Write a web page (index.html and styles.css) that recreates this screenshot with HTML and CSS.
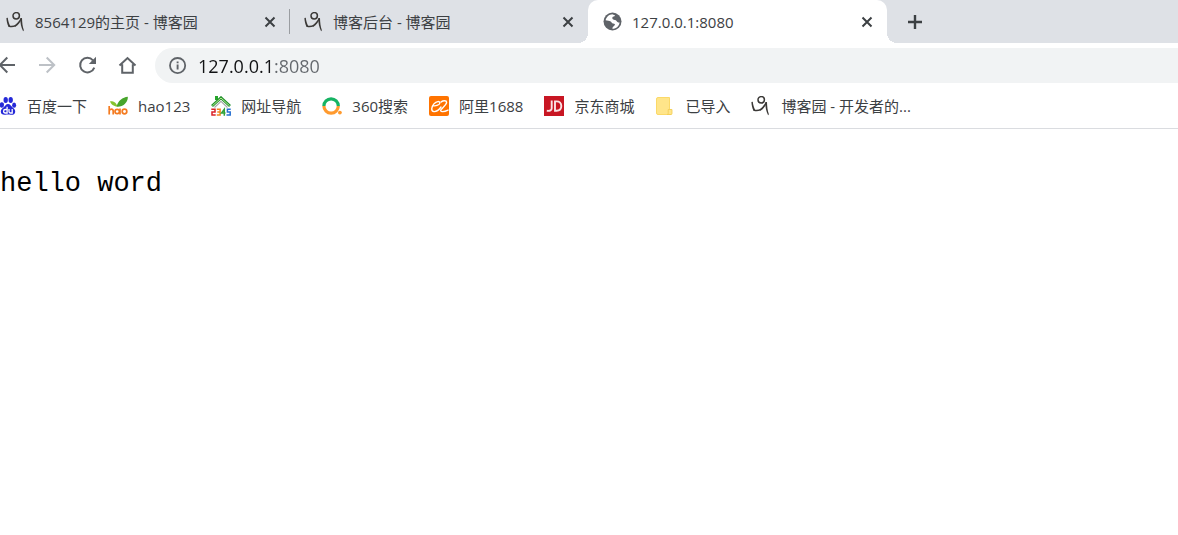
FILE: index.html
```html
<!DOCTYPE html>
<html lang="zh-CN">
<head>
<meta charset="utf-8">
<title>127.0.0.1:8080</title>
<link rel="stylesheet" href="styles.css">
</head>
<body>
<svg class="defs" aria-hidden="true">
  <symbol id="cnblogs" viewBox="0 0 20 20">
    <circle cx="10.200" cy="3.800" r="3.200" fill="none" stroke="#3b3937" stroke-width="1.500"/>
    <g fill="#3b3937">
      <path d="M.4 6l1.400-.2c.3 2.900 1.100 5.600 2.400 8.200l-1.700.8C1.200 12 .5 9 .4 6z"/>
      <path d="M2.400 13.400c2.500.6 5 .5 7.300-.3v1.500c-2.400.8-4.900 1-7.200.2z"/>
      <path d="M8.300 13.400c2.700-1.700 4.800-4.200 6.500-7.400l1.100.6c-1.400 3.700-3.500 6.500-6.500 8.100z"/>
      <path d="M14.300 6.300l1.700-.4c.1 4.500.6 8.700 1.900 12.400l-.8.9c-1.900-3.500-2.900-8-2.800-12.900z"/>
    </g>
  </symbol>
  <symbol id="close" viewBox="0 0 12 12">
    <path d="M1.500 1.500l9 9M10.500 1.500l-9 9" stroke="#3c4043" stroke-width="2" fill="none"/>
  </symbol>
</svg>

<header class="browser">
  <div class="tabs" role="tablist">
    <div class="tab tab-first">
      <button class="tab-label" role="tab" aria-selected="false"><svg class="icon"><use href="#cnblogs"/></svg><span>8564129的主页 - 博客园</span></button>
      <button class="tab-close" aria-label="关闭"><svg class="close-icon"><use href="#close"/></svg></button>
    </div>
    <div class="tab tab-divided">
      <button class="tab-label" role="tab" aria-selected="false"><svg class="icon"><use href="#cnblogs"/></svg><span>博客后台 - 博客园</span></button>
      <button class="tab-close" aria-label="关闭"><svg class="close-icon"><use href="#close"/></svg></button>
    </div>
    <div class="tab tab-active">
      <button class="tab-label" role="tab" aria-selected="true">
        <svg class="icon" viewBox="0 0 20 20"><circle cx="9.500" cy="9.500" r="9" fill="#5f6368"/><path d="M9.600 2.200C6 2.400 3.400 4.800 2.600 8.300c1.900.2 3.700.5 5.100 1.300 1 .6 1 1.800 2.400 1.900 1.500.1 2.100.5 1.700 1.500-.5 1.200-2.300 1.300-2.500 3.700 4 .1 6.800-2.600 7.300-6.300-1.300.4-2.300-.2-3-1.400-.8-1.300-2.600-.8-3.700-1.700-1.200-1-.5-2.500.8-2.700 1.100-.2 1.400-.8.900-1.500-.6-.6-1.600.1-2-.9z" fill="#fff"/></svg>
        <span>127.0.0.1:8080</span></button>
      <button class="tab-close" aria-label="关闭"><svg class="close-icon"><use href="#close"/></svg></button>
    </div>
    <button class="new-tab" aria-label="打开新的标签页"><svg class="plus" viewBox="0 0 16 16"><path d="M8 1v14M1 8h14" stroke="#3c4043" stroke-width="2.400" fill="none"/></svg></button>
  </div>

  <div class="toolbar">
    <nav class="nav">
      <button class="nav-btn back" aria-label="后退"><svg viewBox="0 0 20 20"><path d="M18 9H3M10.300 1.500L2.800 9l7.500 7.500" fill="none" stroke="#5f6368" stroke-width="2"/></svg></button>
      <button class="nav-btn" aria-label="前进" disabled><svg viewBox="0 0 20 20"><path d="M2 9h15M9.700 1.500l7.500 7.500-7.500 7.500" fill="none" stroke="#bdc1c6" stroke-width="2"/></svg></button>
      <button class="nav-btn" aria-label="重新加载"><svg viewBox="0 0 20 20"><path d="M17.300 11.600A7.300 7.300 0 1 1 16 4.300" fill="none" stroke="#5f6368" stroke-width="2"/><path d="M19 .8v7.200h-7.200z" fill="#5f6368"/></svg></button>
      <button class="nav-btn" aria-label="主页"><svg viewBox="0 0 20 20"><path d="M2.500 9.500L10.500 2l8 7.500M5.200 8.300v8.400h10.600V8.300" fill="none" stroke="#5f6368" stroke-width="2"/></svg></button>
    </nav>
    <label class="omnibox">
      <svg class="info" viewBox="0 0 18 18"><circle cx="8.600" cy="8.600" r="7.600" fill="none" stroke="#5f6368" stroke-width="1.800"/><path d="M8.600 7.600v5M8.600 4.400v1.900" stroke="#5f6368" stroke-width="1.900"/></svg>
      <input class="url" type="text" value="127.0.0.1:8080" aria-label="地址栏">
    </label>
  </div>

  <nav class="bookmarks">
    <a class="bookmark" href="#">
      <svg class="icon icon-cut" viewBox="2 0 17 20"><g fill="#2529d8"><ellipse cx="3.900" cy="9" rx="2.100" ry="2.700"/><ellipse cx="7.700" cy="4" rx="2.200" ry="2.900"/><ellipse cx="12.700" cy="4" rx="2.200" ry="2.900"/><ellipse cx="16.100" cy="9.200" rx="2" ry="2.600"/><path d="M10 8c2.200 0 2.900 1.900 4.600 3.400 1.800 1.500 2.800 2.600 2.600 4.600-.3 2.500-2.400 3-4.700 2.700-1.700-.3-3.200-.3-5 0-2.500.3-4.500-.3-4.700-2.900-.2-2 1.200-3.100 2.900-4.500C7.300 10 7.800 8 10 8z"/></g><path d="M9.100 10.800v6.200H7.300c-2.300 0-2.300-3.500 0-3.500h1.800M11 13v2.600c0 .9.400 1.400 1.300 1.400h1.900v-4" fill="none" stroke="#fff" stroke-width="1.300"/></svg>
      <span>百度一下</span></a>
    <a class="bookmark" href="#">
      <svg class="icon" viewBox="0 0 20 20"><path d="M9.300 10.500C8.500 6.300 5.500 4.900 2 5.200c.8 3 3.600 5.200 7.300 5.300z" fill="#86c32d"/><path d="M8.700 10.700C9.700 5 14.700 1.200 19.800.8c.5 5.600-5.300 10.700-11.100 9.900z" fill="#48a52c"/><g fill="none" stroke="#f47b20" stroke-width="1.700"><path d="M1.200 10v8.500M1.200 15c.5-2.400 4-2.600 4 .2v3.300"/><circle cx="9.200" cy="15.500" r="2.200"/><path d="M12 12.500v6"/><circle cx="16.500" cy="15.500" r="2.300"/></g></svg>
      <span>hao123</span></a>
    <a class="bookmark" href="#">
      <svg class="icon" viewBox="0 0 20 20"><path d="M4 0h3v4H4z" fill="#27a52c"/><path d="M1 10L10 1.800l9 8.200" fill="none" stroke="#208f2b" stroke-width="2.800"/><path d="M1.400 9.800L10 2l8.600 7.800" fill="none" stroke="#b9ec92" stroke-width="1"/><path d="M3.500 11.500L10 5.400l6.500 6.100" fill="none" stroke="#aaa" stroke-width="1.200"/><g fill="none" stroke-width="1.500"><path d="M.3 13.200h3.700v2.900H1v2.900h3.700" stroke="#dc2329"/><path d="M5.800 13.200h3.300V19H5.800M6.300 16.100h3" stroke="#f1841c"/><path d="M13.300 19.700v-6.400l-2.800 3.800h4" stroke="#31a33a"/><path d="M19.700 13.200h-3.300V16h2.800v3h-3.700" stroke="#246fd1"/></g></svg>
      <span>网址导航</span></a>
    <a class="bookmark" href="#">
      <svg class="icon" viewBox="0 0 20 20"><g fill="none" stroke-width="3.200"><path d="M1.900 10a7.200 7.200 0 0 1 14.400 0" stroke="#16b363"/><path d="M16.300 10a7.200 7.200 0 0 1-14.400 0" stroke="#ff9a2e"/></g><circle cx="17.900" cy="16.600" r="1.900" fill="#ff9a2e"/></svg>
      <span>360搜索</span></a>
    <a class="bookmark" href="#">
      <svg class="icon" viewBox="0 0 20 20"><rect width="20" height="20" rx="2" fill="#ff7300"/><path d="M4.500 9.800c2.600.3 6.200-.9 6.400-2.800.1-2.300-3.600-1.800-6 .9-2.600 2.900-3.200 7.400.1 7.700 2.600.2 5.300-2.300 7-4.600M12.200 5.900c1.900-1.500 5.400-1.700 5.400.3 0 2.500-4 5.400-5.600 7.400-.8 1-.2 2 1.300 2 2 .1 3.900-.6 5.700-1.500" fill="none" stroke="#fff" stroke-width="1.400" stroke-linecap="round"/></svg>
      <span>阿里1688</span></a>
    <a class="bookmark" href="#">
      <svg class="icon" viewBox="0 0 20 20"><rect width="20" height="20" fill="#c81623"/><path d="M7.700 4.500v7.700c0 2.100-1.500 2.900-4.900 2.600M11 5.400v9.300h1.600c3 0 4.700-1.600 4.700-4.700 0-3-1.700-4.600-4.700-4.600z" fill="none" stroke="#fbe3e5" stroke-width="1.900"/></svg>
      <span>京东商城</span></a>
    <a class="bookmark" href="#">
      <svg class="icon" viewBox="0 0 20 20"><path d="M3 1.500h11.500v12h1.500v5H3A1.500 1.500 0 0 1 1.500 17V3A1.500 1.500 0 0 1 3 1.500z" fill="#ffe58a" stroke="#fbd968" stroke-width="1"/><path d="M16 13.500h-2.800v2.800c0 1.300 0 2.200-.9 2.200H16c.7 0 1-.4 1-1v-4z" fill="#ffe58a" stroke="#f1cc52" stroke-width=".8"/></svg>
      <span>已导入</span></a>
    <a class="bookmark" href="#">
      <svg class="icon"><use href="#cnblogs"/></svg>
      <span>博客园 - 开发者的...</span></a>
  </nav>
</header>

<main class="page"><p class="message">hello word</p></main>
</body>
</html>
```
FILE: styles.css
```css
* {
  box-sizing: border-box;
}

body {
  margin: 0;
  background: #fff;
  color: #3c4043;
  font-family: "Open Sans", "Noto Sans CJK SC", sans-serif;
  font-size: 15px;
  line-height: 20px;
}

button {
  border: 0;
  padding: 0;
  background: none;
  color: inherit;
  font: inherit;
}

svg {
  display: block;
  flex: none;
}

.defs {
  position: absolute;
  width: 0;
  height: 0;
}

.icon {
  width: 20px;
  height: 20px;
}

.icon-cut {
  width: 17px;
}

.browser {
  border-bottom: 1px solid #dadce0;
}

.tabs {
  display: flex;
  height: 43px;
  background: #dee1e6;
}

.tab {
  display: flex;
  align-items: center;
  flex: 0 1 299px;
  min-width: 0;
  padding: 0 14px 0 15px;
}

.tab-first {
  flex-basis: 289px;
  padding: 0 13px 0 6px;
}

.tab-divided {
  background: linear-gradient(#9a9da1, #9a9da1) left center / 1px 25px no-repeat;
}

.tab-active {
  position: relative;
  border-radius: 10px 10px 0 0;
  background: #fff;
}

.tab-active::before,
.tab-active::after {
  content: "";
  position: absolute;
  bottom: 0;
  width: 10px;
  height: 10px;
}

.tab-active::before {
  right: 100%;
  background: radial-gradient(circle at 0 0, transparent 10px, #fff 10px);
}

.tab-active::after {
  left: 100%;
  background: radial-gradient(circle at 100% 0, transparent 10px, #fff 10px);
}

.tab-label {
  display: flex;
  align-items: center;
  flex: 1;
  gap: 9px;
  min-width: 0;
  text-align: left;
  white-space: nowrap;
}

.close-icon {
  width: 12px;
  height: 12px;
}

.new-tab {
  padding: 0 20px;
}

.plus {
  width: 16px;
  height: 16px;
}

.toolbar {
  display: flex;
  align-items: center;
  padding-top: 5px;
}

.nav {
  display: flex;
  gap: 20px;
  padding-right: 18px;
}

.nav-btn {
  width: 20px;
  height: 20px;
}

.back {
  width: 17px;
}

.nav-btn svg {
  width: 20px;
  height: 20px;
}

.back svg {
  margin-left: -3px;
}

.omnibox {
  display: flex;
  align-items: center;
  flex: 1;
  gap: 11px;
  height: 35px;
  padding-left: 14px;
  border-radius: 18px 0 0 18px;
  background: #f1f3f4;
}

.info {
  width: 18px;
  height: 18px;
}

.url {
  flex: 1;
  min-width: 0;
  border: 0;
  padding: 0;
  outline: 0;
  background: linear-gradient(to right, #111214 75px, #64686d 75px);
  -webkit-background-clip: text;
  background-clip: text;
  color: transparent;
  font: inherit;
  font-size: 18px;
  line-height: 24px;
}

.bookmarks {
  display: flex;
  align-items: center;
  gap: 21px;
  height: 45px;
}

.bookmark {
  display: flex;
  align-items: center;
  gap: 10px;
  color: inherit;
  text-decoration: none;
  white-space: nowrap;
}

.message {
  margin: 35px 0;
  color: #000;
  font-family: "Liberation Mono", monospace;
  font-size: 27px;
  line-height: 40px;
}
```
